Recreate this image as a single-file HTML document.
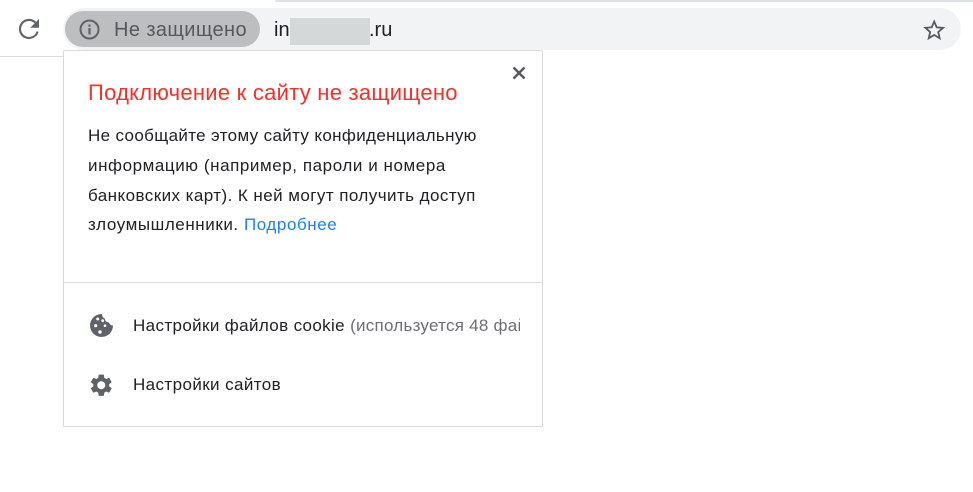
<!DOCTYPE html>
<html><head><meta charset="utf-8">
<style>
html,body{margin:0;padding:0;background:#fff;width:973px;height:492px;overflow:hidden}
body{position:relative;font-family:"Liberation Sans","DejaVu Sans",sans-serif}
.a{position:absolute;white-space:nowrap}
.t{position:absolute;white-space:nowrap;font-size:17px;line-height:20px;color:#202124}
</style></head><body>
<div class="a" style="left:275px;top:0;width:698px;height:2px;background:#dee1e6;border-bottom-left-radius:6px"></div>
<div class="a" style="left:0;top:56px;width:64px;height:1px;background:#dadce0"></div>
<svg class="a" style="left:14px;top:14px" width="30" height="30" viewBox="0 0 24 24"><path fill="none" stroke="#5f6368" stroke-width="1.7" d="M17.1 6.9 A7.2 7.2 0 1 0 18.9 14"/><path fill="#5f6368" d="M13 11h7V4z"/></svg>
<div class="a" style="left:63px;top:8px;width:898px;height:42px;border-radius:21px;background:#f1f3f4"></div>
<div class="a" style="left:65px;top:11px;width:195px;height:36px;border-radius:18px;background:#bdbebf"></div>
<svg class="a" style="left:78px;top:18px" width="23" height="23" viewBox="0 0 23 23"><circle cx="11.5" cy="11.5" r="9" fill="none" stroke="#5f6368" stroke-width="2"/><rect x="10.4" y="10" width="2.2" height="6.5" fill="#5f6368"/><rect x="10.4" y="6.5" width="2.2" height="2.2" fill="#5f6368"/></svg>
<div class="t" style="left:114px;top:19px;font-size:20px;line-height:22px;color:#55585c;letter-spacing:.4px">Не защищено</div>
<div class="t" style="left:274px;top:19px;font-size:20px;line-height:22px;color:#202124">in</div>
<div class="a" style="left:290px;top:18px;width:80px;height:27px;background:#d5d8d9"></div>
<div class="t" style="left:369px;top:19px;font-size:20px;line-height:22px;color:#202124">.ru</div>
<svg class="a" style="left:920.5px;top:16.5px" width="26.4" height="26.4" viewBox="0 0 24 24"><path fill="#55585c" d="M22 9.24l-7.19-.62L12 2 9.19 8.63 2 9.24l5.46 4.73L5.82 21 12 17.27 18.18 21l-1.63-7.03L22 9.24zM12 15.4l-3.76 2.27 1-4.28-3.32-2.88 4.38-.38L12 6.1l1.71 4.04 4.38.38-3.32 2.88 1 4.28L12 15.4z"/></svg>

<div class="a" style="left:63px;top:50px;width:478px;height:375px;background:#fff;border:1px solid #d9d9d9;border-radius:2px 2px 0 0"></div>
<svg class="a" style="left:511px;top:65px" width="16" height="16" viewBox="0 0 16 16"><path d="M2.5 2.5 L13.5 13.5 M13.5 2.5 L2.5 13.5" stroke="#55585c" stroke-width="2.4" fill="none"/></svg>
<div class="t" style="left:88px;top:81px;font-size:22px;line-height:24px;color:#f5302a;letter-spacing:.25px">Подключение к сайту не защищено</div>
<div class="t" style="left:88px;top:126px;letter-spacing:.35px">Не сообщайте этому сайту конфиденциальную</div>
<div class="t" style="left:88px;top:156px;letter-spacing:.57px">информацию (например, пароли и номера</div>
<div class="t" style="left:88px;top:186px;letter-spacing:.44px">банковских карт). К ней могут получить доступ</div>
<div class="t" style="left:88px;top:215px;letter-spacing:.57px">злоумышленники. <span style="color:#1a82f0">Подробнее</span></div>
<div class="a" style="left:64px;top:282px;width:478px;height:1px;background:#dcdcdc"></div>
<svg class="a" style="left:89px;top:313px" width="25" height="25" viewBox="0 0 25 25"><path fill="#5f6368" d="M12.5 1 A11.5 11.5 0 1 0 24 12.5 C22 12.5 20.5 11 20 9.5 C18 9.5 16 8 15.8 5.5 C14 5 13 3 13 1 Z"/><circle cx="8.7" cy="6" r="1.5" fill="#fff"/><circle cx="13.7" cy="7.7" r="1.4" fill="#fff"/><circle cx="6.7" cy="12.7" r="1.6" fill="#fff"/><circle cx="16" cy="12.7" r="1.3" fill="#fff"/><circle cx="11" cy="19" r="1.7" fill="#fff"/></svg>
<div class="t" style="left:133px;top:316px;width:387px;overflow:hidden;letter-spacing:.37px">Настройки файлов cookie <span style="color:#6b6e72;letter-spacing:.25px">(используется 48 файлов)</span></div>
<svg class="a" style="left:88.25px;top:372.25px" width="26.5" height="26.5" viewBox="0 0 24 24"><path fill="#5f6368" d="M19.14 12.94c.04-.3.06-.61.06-.94 0-.32-.02-.64-.07-.94l2.03-1.58a.49.49 0 0 0 .12-.61l-1.92-3.32a.488.488 0 0 0-.59-.22l-2.39.96c-.5-.38-1.03-.7-1.62-.94l-.36-2.54a.484.484 0 0 0-.48-.41h-3.84c-.24 0-.43.17-.47.41l-.36 2.54c-.59.24-1.13.57-1.62.94l-2.39-.96c-.22-.08-.47 0-.59.22L2.74 8.87c-.12.21-.08.47.12.61l2.03 1.58c-.05.3-.09.63-.09.94s.02.64.07.94l-2.03 1.58a.49.49 0 0 0-.12.61l1.92 3.32c.12.22.37.29.59.22l2.39-.96c.5.38 1.03.7 1.62.94l.36 2.54c.05.24.24.41.48.41h3.84c.24 0 .44-.17.47-.41l.36-2.54c.59-.24 1.13-.56 1.62-.94l2.39.96c.22.08.47 0 .59-.22l1.92-3.32c.12-.22.07-.47-.12-.61l-2.01-1.58zM12 15.6c-1.98 0-3.6-1.62-3.6-3.6s1.62-3.6 3.6-3.6 3.6 1.62 3.6 3.6-1.62 3.6-3.6 3.6z"/></svg>
<div class="t" style="left:133px;top:375px;letter-spacing:.4px">Настройки сайтов</div>
</body></html>
